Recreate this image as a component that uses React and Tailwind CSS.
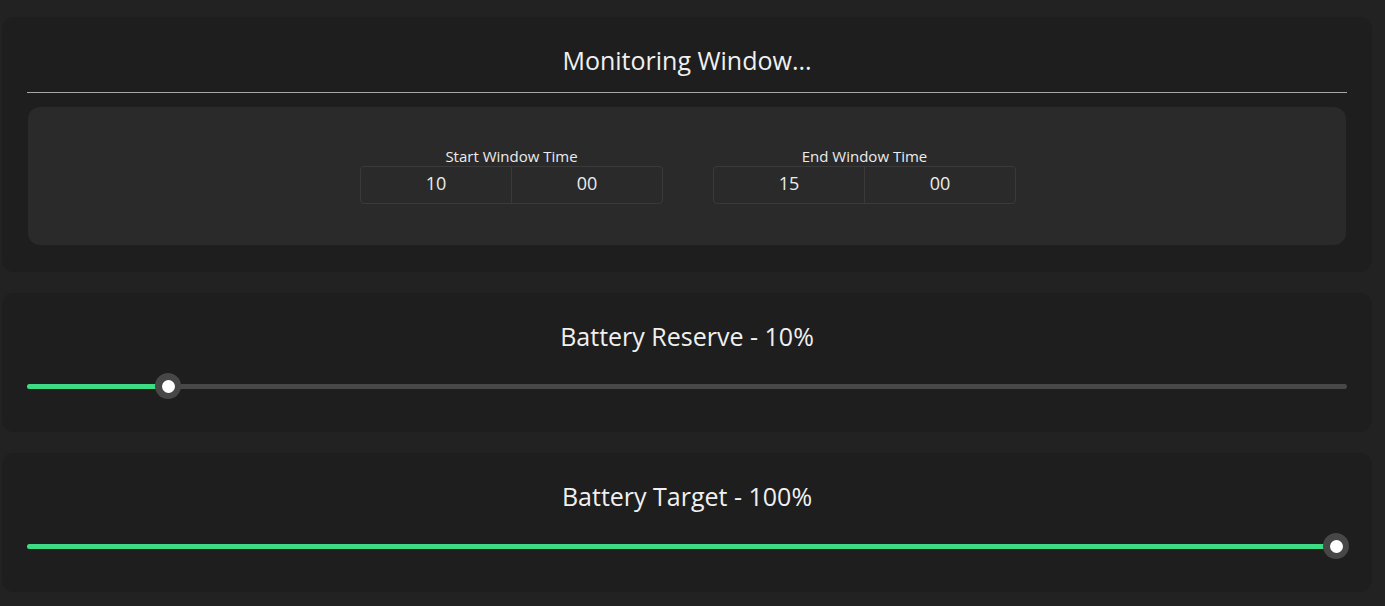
import React from "react";

function TimeInput({ label, h, m }) {
  return (
    <div className="flex flex-col items-center">
      <div className="text-[15px] leading-[20px] text-[#ececec]">{label}</div>
      <div className="flex h-[38px] w-[303px] rounded-[4px] border border-[#3a3a3a]">
        <div className="flex flex-1 items-center justify-center border-r border-[#3a3a3a] pb-[3px] text-[18px] text-[#ececec]">{h}</div>
        <div className="flex flex-1 items-center justify-center pb-[3px] text-[18px] text-[#ececec]">{m}</div>
      </div>
    </div>
  );
}

function Slider({ thumbX }) {
  return (
    <div className="relative h-[26px] w-full">
      <div className="absolute left-0 right-0 top-[11px] h-[5px] rounded-full bg-[#484848]" />
      <div
        className="absolute left-0 top-[11px] h-[5px] rounded-full bg-[#3ddc84]"
        style={{ width: thumbX }}
      />
      <div
        className="absolute top-0 flex h-[26px] w-[26px] items-center justify-center rounded-full bg-[#474747]"
        style={{ left: thumbX - 13 }}
      >
        <div className="h-[13px] w-[13px] rounded-full bg-white" />
      </div>
    </div>
  );
}

function SliderCard({ title, thumbX }) {
  return (
    <div className="rounded-[12px] bg-[#1e1e1e] px-[25px] pt-[28px] pb-[33px]">
      <div className="pb-[2px] text-center text-[25px] leading-[30px] text-[#f0f0f0]">{title}</div>
      <div className="mt-[20px]">
        <Slider thumbX={thumbX} />
      </div>
    </div>
  );
}

export default function App() {
  return (
    <div
      className="min-h-[606px] bg-[#222222] pl-[2px] pr-[13px] pt-[17px]"
      style={{ fontFamily: '"Open Sans", sans-serif' }}
    >
      <div className="flex flex-col gap-[21px]">
        <div className="rounded-[12px] bg-[#1e1e1e] px-[25px] pt-[28px] pb-[27px]">
          <div className="pb-[2px] text-center text-[25px] leading-[30px] text-[#f0f0f0]">Monitoring Window...</div>
          <div className="mt-[15px] h-px bg-[#a8a8a8]" />
          <div className="mx-[1px] mt-[14px] flex h-[138px] items-center justify-center gap-[50px] rounded-[12px] bg-[#2a2a2a] pb-[2px] pl-[2px]">
            <TimeInput label="Start Window Time" h="10" m="00" />
            <TimeInput label="End Window Time" h="15" m="00" />
          </div>
        </div>
        <SliderCard title="Battery Reserve - 10%" thumbX={141} />
        <SliderCard title="Battery Target - 100%" thumbX={1309} />
      </div>
    </div>
  );
}
